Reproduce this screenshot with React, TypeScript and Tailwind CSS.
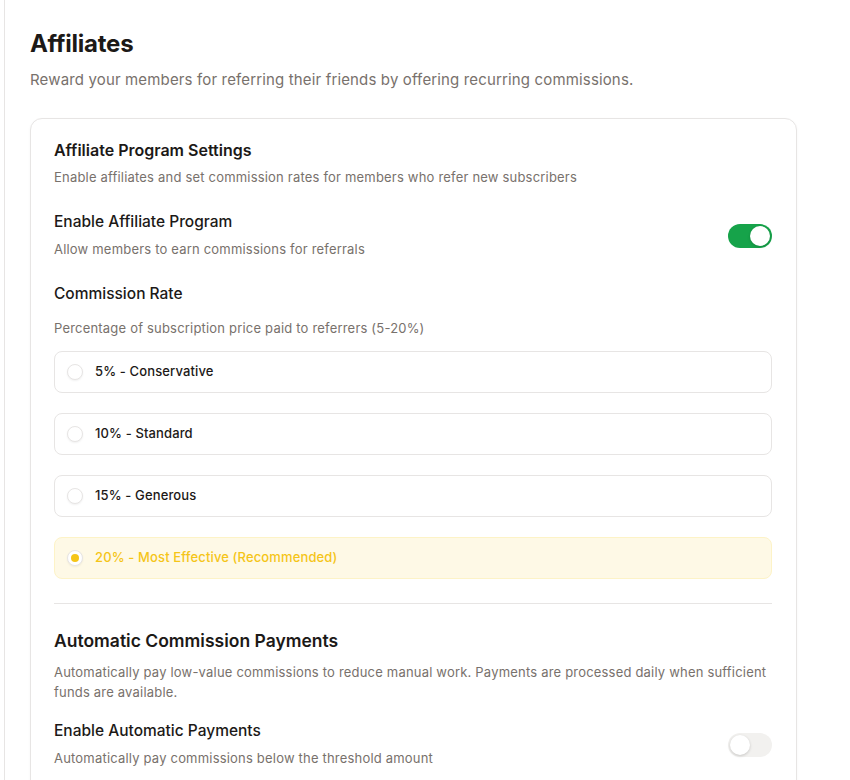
import { useState } from 'react'

const rates = [
  { value: 5, label: '5% - Conservative' },
  { value: 10, label: '10% - Standard' },
  { value: 15, label: '15% - Generous' },
  { value: 20, label: '20% - Most Effective (Recommended)' },
]

function Toggle({ on, onChange }: { on: boolean; onChange: () => void }) {
  return (
    <button
      type="button"
      onClick={onChange}
      className={`relative h-6 w-11 shrink-0 rounded-full transition-colors ${on ? 'bg-[#16a34a]' : 'bg-[#f2f1ef]'}`}
    >
      <span
        className={`absolute top-[2px] h-5 w-5 rounded-full bg-white shadow-[0_1px_3px_rgba(0,0,0,0.18)] transition-all ${on ? 'left-[22px]' : 'left-[2px]'}`}
      />
    </button>
  )
}

export default function App() {
  const [enabled, setEnabled] = useState(true)
  const [autoPay, setAutoPay] = useState(false)
  const [rate, setRate] = useState(20)

  return (
    <div
      className="min-h-[780px] bg-white text-[#1c1917]"
      style={{ fontFamily: 'Inter, "Noto Sans", sans-serif' }}
    >
      <div className="ml-[4px] min-h-[780px] border-l border-[#e7e5e4] pl-[25px] pr-[53px] pt-[28px]">
        <h1 className="text-[24px] font-bold leading-8 tracking-[-0.01em]">Affiliates</h1>
        <p className="mt-[8px] text-[15px] leading-6 tracking-[0.01em] text-[#78716c]">
          Reward your members for referring their friends by offering recurring commissions.
        </p>

        <div className="mt-[26px] rounded-xl border border-[#e7e5e4] bg-white pl-[23px] pr-6 pt-[21px] pb-6 shadow-[0_1px_3px_rgba(0,0,0,0.04)]">
          <h2 className="text-[16px] font-semibold leading-5">Affiliate Program Settings</h2>
          <p className="mt-[7px] text-[13px] leading-5 tracking-[0.015em] text-[#78716c]">
            Enable affiliates and set commission rates for members who refer new subscribers
          </p>

          <div className="mt-[25px] flex items-center justify-between">
            <div>
              <div className="text-[15.5px] font-medium leading-5">Enable Affiliate Program</div>
              <div className="mt-[7px] text-[13px] leading-5 tracking-[0.015em] text-[#78716c]">
                Allow members to earn commissions for referrals
              </div>
            </div>
            <Toggle on={enabled} onChange={() => setEnabled(!enabled)} />
          </div>

          <div className="mt-[25px] text-[15.5px] font-medium leading-5">Commission Rate</div>
          <p className="mt-[14px] text-[13px] leading-5 tracking-[0.015em] text-[#78716c]">
            Percentage of subscription price paid to referrers (5-20%)
          </p>

          <div className="mt-[13px] flex flex-col gap-5">
            {rates.map((r) => {
              const active = rate === r.value
              return (
                <label
                  key={r.value}
                  onClick={() => setRate(r.value)}
                  className={`flex h-[42px] cursor-pointer items-center gap-[12px] rounded-lg border px-[12px] ${
                    active ? 'border-[#fdf3c7] bg-[#fef9e6]' : 'border-[#e7e5e4] bg-white'
                  }`}
                >
                  <span className="flex h-4 w-4 items-center justify-center rounded-full border border-[#e7e5e4] bg-white shadow-[0_1px_2px_rgba(0,0,0,0.06)]">
                    {active && <span className="h-2 w-2 rounded-full bg-[#f5c518]" />}
                  </span>
                  <span
                    className={`text-[13px] font-medium tracking-[0.01em] ${active ? 'text-[#f5c518]' : 'text-[#1c1917]'}`}
                  >
                    {r.label}
                  </span>
                </label>
              )
            })}
          </div>

          <div className="mt-6 border-t border-[#e7e5e4]" />

          <h2 className="mt-[25px] text-[17.5px] font-semibold leading-6">Automatic Commission Payments</h2>
          <p className="mt-[9px] text-[13px] leading-5 tracking-[0.015em] text-[#78716c]">
            Automatically pay low-value commissions to reduce manual work. Payments are processed daily when sufficient
            funds are available.
          </p>

          <div className="mt-[19px] flex items-center justify-between">
            <div>
              <div className="text-[15.5px] font-medium leading-5">Enable Automatic Payments</div>
              <div className="mt-[7px] text-[13px] leading-5 tracking-[0.015em] text-[#78716c]">
                Automatically pay commissions below the threshold amount
              </div>
            </div>
            <Toggle on={autoPay} onChange={() => setAutoPay(!autoPay)} />
          </div>
        </div>
      </div>
    </div>
  )
}
